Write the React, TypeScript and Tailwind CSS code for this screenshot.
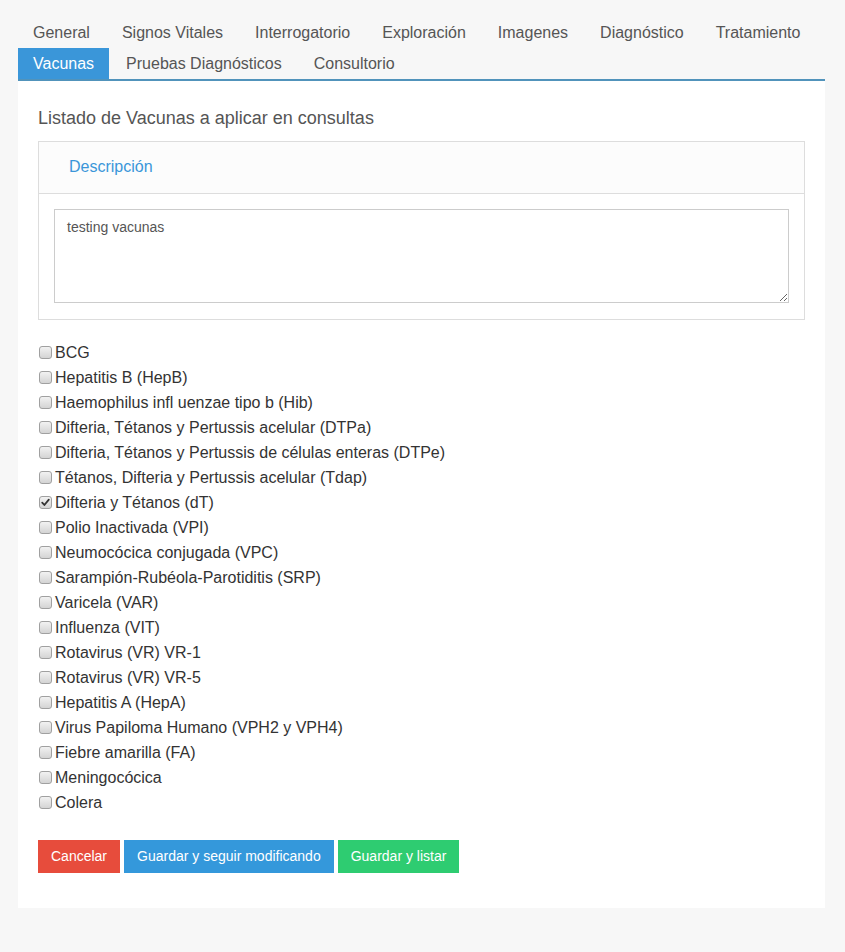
import React from "react";

const tabs = [
  "General",
  "Signos Vitales",
  "Interrogatorio",
  "Exploración",
  "Imagenes",
  "Diagnóstico",
  "Tratamiento",
  "Vacunas",
  "Pruebas Diagnósticos",
  "Consultorio",
];

const vacunas = [
  { name: "BCG", checked: false },
  { name: "Hepatitis B (HepB)", checked: false },
  { name: "Haemophilus infl uenzae tipo b (Hib)", checked: false },
  { name: "Difteria, Tétanos y Pertussis acelular (DTPa)", checked: false },
  { name: "Difteria, Tétanos y Pertussis de células enteras (DTPe)", checked: false },
  { name: "Tétanos, Difteria y Pertussis acelular (Tdap)", checked: false },
  { name: "Difteria y Tétanos (dT)", checked: true },
  { name: "Polio Inactivada (VPI)", checked: false },
  { name: "Neumocócica conjugada (VPC)", checked: false },
  { name: "Sarampión-Rubéola-Parotiditis (SRP)", checked: false },
  { name: "Varicela (VAR)", checked: false },
  { name: "Influenza (VIT)", checked: false },
  { name: "Rotavirus (VR) VR-1", checked: false },
  { name: "Rotavirus (VR) VR-5", checked: false },
  { name: "Hepatitis A (HepA)", checked: false },
  { name: "Virus Papiloma Humano (VPH2 y VPH4)", checked: false },
  { name: "Fiebre amarilla (FA)", checked: false },
  { name: "Meningocócica", checked: false },
  { name: "Colera", checked: false },
];

const Checkbox = ({ checked }: { checked: boolean }) => {
  const [on, setOn] = React.useState(checked);
  return (
    <span className="relative w-[13px] h-[13px] ml-[1px] mr-[3px] shrink-0">
      <input
        type="checkbox"
        checked={on}
        onChange={() => setOn(!on)}
        className="appearance-none block w-[13px] h-[13px] m-0 rounded-[3px] border border-[#a0a0a0] bg-gradient-to-b from-[#f2f2f2] to-[#d4d4d4]"
      />
      {on && (
        <svg
          viewBox="0 0 13 13"
          className="absolute left-0 top-0 w-[13px] h-[13px] pointer-events-none"
        >
          <path d="M3.2 6.6 L5.4 9 L9.8 3.6" fill="none" stroke="#333" strokeWidth="1.8" strokeLinecap="round" strokeLinejoin="round" />
        </svg>
      )}
    </span>
  );
};

const App = () => {
  return (
    <div className="min-h-screen bg-[#f7f7f7] pl-[18px] pr-[20px] pt-[17px] font-['Liberation_Sans',Arial,sans-serif]">
      <ul className="flex flex-wrap gap-x-[2px] border-b-2 border-[#5193bb]">
        {tabs.map((tab) => (
          <li
            key={tab}
            className={
              tab === "Vacunas"
                ? "h-[31px] px-[15px] text-[16px] leading-[31px] bg-[#3a96d9] text-white"
                : "h-[31px] px-[15px] text-[16px] leading-[31px] text-[#555]"
            }
          >
            {tab}
          </li>
        ))}
      </ul>

      <div className="bg-white px-[20px] pt-[27px] pb-[35px]">
        <h3 className="text-[18px] leading-[20px] text-[#555] mb-[13px]">
          Listado de Vacunas a aplicar en consultas
        </h3>

        <div className="border border-[#ddd]">
          <div className="h-[52px] bg-[#fcfcfc] border-b border-[#ddd] pl-[30px] flex items-center">
            <span className="text-[16px] leading-[18px] text-[#3a96d9] -mt-[1px]">Descripción</span>
          </div>
          <div className="px-[15px] pt-[15px] pb-[16px]">
            <textarea
              defaultValue="testing vacunas"
              className="block w-full h-[94px] border border-[#ccc] px-[12px] py-[7px] text-[14px] text-[#555] outline-none font-['Liberation_Sans',Arial,sans-serif]"
            />
          </div>
        </div>

        <div className="mt-[20px] flex flex-col">
          {vacunas.map((v) => (
            <label key={v.name} className="flex items-center h-[25px] text-[16px] text-[#333]">
              <Checkbox checked={v.checked} />
              {v.name}
            </label>
          ))}
        </div>

        <div className="mt-[25px] flex gap-[4px]">
          <button className="h-[33px] px-[13px] bg-[#e74c3c] text-white text-[14px]">
            Cancelar
          </button>
          <button className="h-[33px] px-[13px] bg-[#3498db] text-white text-[14px]">
            Guardar y seguir modificando
          </button>
          <button className="h-[33px] px-[13px] bg-[#2ecc71] text-white text-[14px]">
            Guardar y listar
          </button>
        </div>
      </div>
    </div>
  );
};

export default App;
